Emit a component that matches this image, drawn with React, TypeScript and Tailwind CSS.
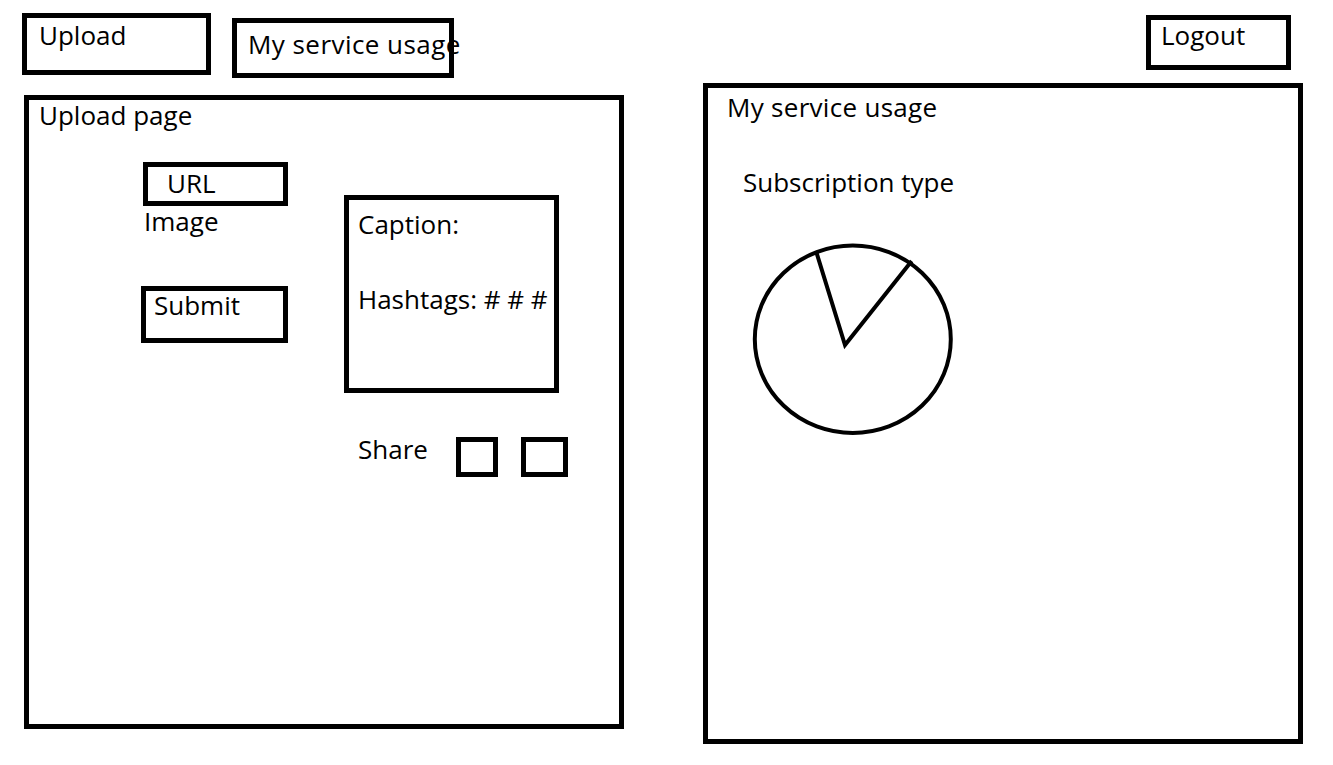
const label = "text-[26px] leading-none whitespace-nowrap text-black";

function PieSketch() {
  return (
    <svg width="210" height="200" viewBox="0 0 210 200" fill="none" className="block">
      <ellipse cx="102.8" cy="98.3" rx="98" ry="93.7" stroke="black" strokeWidth="4" />
      <polyline
        points="66,10 95,104 161.7,20"
        stroke="black"
        strokeWidth="4"
        strokeLinejoin="miter"
        strokeLinecap="butt"
      />
    </svg>
  );
}

function UploadPanel() {
  return (
    <section className="ml-[24px] mt-[17px] flex h-[634px] w-[600px] flex-col border-[5px] border-black">
      <p className={`${label} pl-[10px] pt-[2px]`}>Upload page</p>

      <div className="-mt-[2px] flex items-start">
        <div className="ml-[112px] flex flex-col items-start">
          <div className="ml-[2px] mt-[36px] h-[44px] w-[145px] border-[5px] border-black pl-[19px] pt-[3px]">
            <span className={label}>URL</span>
          </div>
          <p className={`${label} ml-[3px] mt-[2px]`}>Image</p>
          <div className="mt-[52px] h-[57px] w-[147px] border-[5px] border-black pl-[8px] pt-[1px]">
            <span className={`${label} block`}>Submit</span>
          </div>
        </div>

        <div className="ml-[56px] mt-[69px] flex flex-col">
          <div className="flex h-[198px] w-[215px] flex-col border-[5px] border-black pl-[9px] pt-[11px]">
            <p className={label}>Caption:</p>
            <p className={`${label} mt-[49px]`}>Hashtags: # # #</p>
          </div>

          <div className="mt-[43px] flex items-start">
            <span className={`${label} ml-[14px] w-[98px]`}>Share</span>
            <div className="mt-[1px] h-[40px] w-[42px] border-[5px] border-black" />
            <div className="ml-[23px] mt-[1px] h-[40px] w-[47px] border-[5px] border-black" />
          </div>
        </div>
      </div>
    </section>
  );
}

function UsagePanel() {
  return (
    <section className="mt-[13px] flex h-[661px] w-[600px] flex-col border-[5px] border-black">
      <p className={`${label} pl-[19px] pt-[6px] tracking-[0.3px]`}>My service usage</p>
      <p className={`${label} ml-[35px] mt-[49px]`}>Subscription type</p>
      <div className="ml-[42px] mt-[46px]">
        <PieSketch />
      </div>
    </section>
  );
}

export default function App() {
  return (
    <div className="flex h-[765px] w-[1333px] items-start overflow-hidden bg-white font-['Open_Sans',sans-serif]">
      <div className="flex flex-col">
        <nav className="flex items-start">
          <div className="ml-[22px] mt-[13px] h-[62px] w-[189px] border-[5px] border-black pl-[12px] pt-[4px]">
            <span className={label}>Upload</span>
          </div>
          <div className="ml-[21px] mt-[18px] h-[60px] w-[222px] border-[5px] border-black pl-[11px] pt-[8px]">
            <span className={`${label} tracking-[0.45px]`}>My service usage</span>
          </div>
        </nav>
        <UploadPanel />
      </div>

      <div className="ml-[79px] flex flex-col">
        <div className="ml-[443px] mt-[15px] h-[55px] w-[145px] border-[5px] border-black pl-[10px] pt-[2px]">
          <span className={label}>Logout</span>
        </div>
        <UsagePanel />
      </div>
    </div>
  );
}
